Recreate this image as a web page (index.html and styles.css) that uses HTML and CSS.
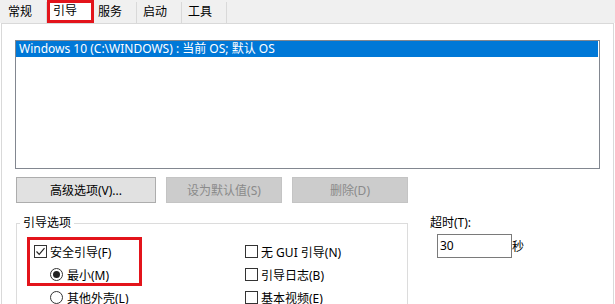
FILE: index.html
```html
<!DOCTYPE html>
<html lang="zh-CN">

<head>
    <meta charset="UTF-8">
    <meta name="viewport" content="width=device-width, initial-scale=1.0">
    <title>系统配置</title>
    <link rel="stylesheet" href="styles.css">
</head>

<body>
    <div class="tabs">
        <div class="tab">常规</div>
        <div class="tab active">引导</div>
        <div class="tab">服务</div>
        <div class="tab">启动</div>
        <div class="tab">工具</div>
    </div>

    <div class="panel">
        <div class="oslist">
            <div class="os-item selected">Windows 10 (C:\WINDOWS) : 当前 OS; 默认 OS</div>
        </div>

        <div class="buttons">
            <button class="btn btn-wide">高级选项(V)...</button>
            <button class="btn" disabled>设为默认值(S)</button>
            <button class="btn" disabled>删除(D)</button>
        </div>

        <div class="lower">
            <fieldset class="options">
                <legend>引导选项</legend>
                <div class="cols">
                    <div class="col col-left">
                        <div class="highlight">
                            <div class="opt">
                                <span class="check">
                                    <svg width="11" height="11" viewBox="0 0 11 11">
                                        <polyline points="1.5,5.5 4.2,8.3 9.5,2.2" fill="none" stroke="#222" stroke-width="1.2" />
                                    </svg>
                                </span>安全引导(F)
                            </div>
                            <div class="opt sub"><span class="radio checked"></span>最小(M)</div>
                        </div>
                        <div class="opt sub"><span class="radio"></span>其他外壳(L)</div>
                    </div>
                    <div class="col col-right">
                        <div class="opt"><span class="check"></span>无 GUI 引导(N)</div>
                        <div class="opt"><span class="check"></span>引导日志(B)</div>
                        <div class="opt"><span class="check"></span>基本视频(E)</div>
                    </div>
                </div>
            </fieldset>

            <div class="timeout">
                <div class="timeout-label">超时(T):</div>
                <div class="timeout-row">
                    <div class="field">30</div>
                    <span class="unit">秒</span>
                </div>
            </div>
        </div>
    </div>
</body>

</html>
```

FILE: styles.css
```css
body {
    margin: 0;
    width: 615px;
    height: 304px;
    overflow: hidden;
    background: #fff;
    color: #000;
    font-family: "Noto Sans", "Noto Sans CJK SC", sans-serif;
    font-size: 12px;
}

/* tab strip */
.tabs {
    display: flex;
    align-items: flex-end;
    height: 23px;
    padding-left: 2px;
    background: #f0f0f0;
}

.tab {
    width: 45px;
    height: 21px;
    box-sizing: border-box;
    padding-left: 6px;
    line-height: 20px;
    border-right: 1px solid #d9d9d9;
}

.tab.active {
    position: relative;
    width: 47px;
    height: 23px;
    margin-right: -2px;
    padding-left: 3px;
    line-height: 16px;
    background: #fff;
    border: 3px solid #e3141b;
}

/* page */
.panel {
    width: 613px;
    height: 290px;
    box-sizing: border-box;
    margin-left: 1px;
    padding: 16px 13px 0 13px;
    border: 1px solid #d9d9d9;
    border-bottom: none;
}

.oslist {
    height: 129px;
    box-sizing: border-box;
    border: 1px solid #828790;
    padding-right: 1px;
}

.os-item {
    height: 16px;
    line-height: 16px;
    padding-left: 3px;
    white-space: nowrap;
}

.os-item.selected {
    background: #0078d7;
    color: #fff;
}

.buttons {
    display: flex;
    gap: 10px;
    margin-top: 8px;
    padding-left: 1px;
}

.btn {
    width: 116px;
    height: 26px;
    padding: 0;
    font: inherit;
    color: #000;
    background: #e1e1e1;
    border: 1px solid #adadad;
}

.btn-wide {
    width: 140px;
}

.btn:disabled {
    color: #8a8a8a;
    background: #cccccc;
    border-color: #c4c4c4;
}

/* boot options */
.lower {
    display: flex;
    margin-top: 12px;
    padding-left: 1px;
}

.options {
    width: 392px;
    height: 120px;
    box-sizing: border-box;
    margin: 0;
    padding: 0;
    border: 1px solid #dcdcdc;
    min-width: 0;
}

.options legend {
    margin-left: 3px;
    padding: 0 3px;
    line-height: 16px;
}

.cols {
    display: flex;
    padding: 6px 0 0 10px;
}

.col-left {
    width: 211px;
}

.col-right {
    padding-top: 3px;
}

.highlight {
    width: 115px;
    height: 49px;
    box-sizing: border-box;
    padding-top: 3px;
    outline: 3px solid #e3141b;
    outline-offset: -3px;
}

.opt {
    display: flex;
    align-items: center;
    height: 23px;
    padding-left: 7px;
    white-space: nowrap;
}

.opt.sub {
    padding-left: 23px;
}

.check {
    display: inline-flex;
    align-items: center;
    justify-content: center;
    width: 13px;
    height: 13px;
    box-sizing: border-box;
    margin-right: 3px;
    border: 1px solid #333;
    background: #fff;
}

.radio {
    display: inline-flex;
    align-items: center;
    justify-content: center;
    width: 13px;
    height: 13px;
    box-sizing: border-box;
    margin-right: 4px;
    border: 1px solid #333;
    border-radius: 50%;
    background: #fff;
}

.radio.checked:after {
    content: '';
    width: 7px;
    height: 7px;
    border-radius: 50%;
    background: #222;
}

/* timeout */
.timeout {
    margin-left: 22px;
}

.timeout-label {
    line-height: 16px;
}

.timeout-row {
    display: flex;
    align-items: center;
    margin-top: 3px;
    padding-left: 7px;
}

.field {
    width: 75px;
    height: 24px;
    box-sizing: border-box;
    padding-left: 2px;
    line-height: 22px;
    border: 1px solid #7a7a7a;
}

.unit {
    margin-left: 0;
}
```
